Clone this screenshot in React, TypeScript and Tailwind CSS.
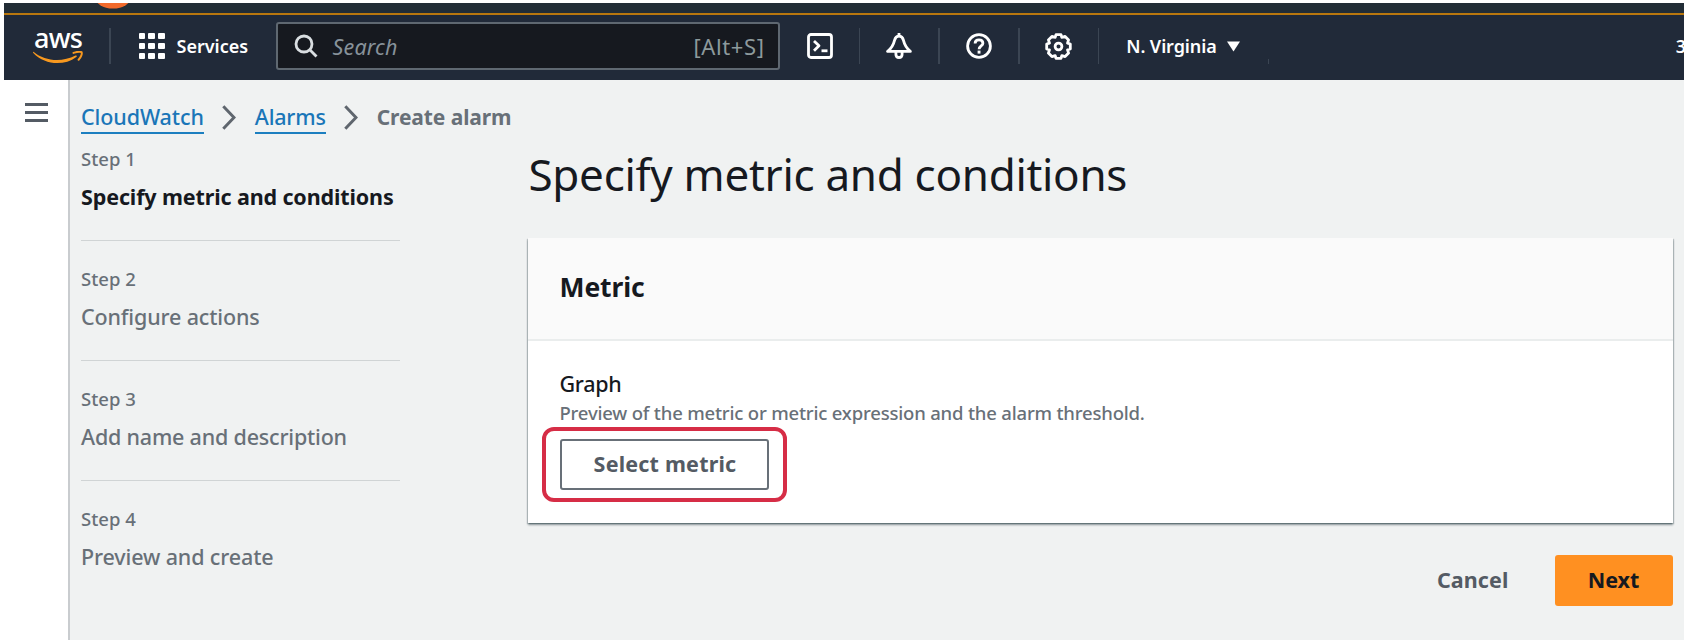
import type { ReactNode } from "react";

const steps = [
  { label: "Step 1", title: "Specify metric and conditions", style: "font-bold text-[#16191f] tracking-[-0.13px]" },
  { label: "Step 2", title: "Configure actions", style: "font-medium text-[#687078] tracking-[-0.15px]" },
  { label: "Step 3", title: "Add name and description", style: "font-medium text-[#687078] tracking-[-0.2px]" },
  { label: "Step 4", title: "Preview and create", style: "font-medium text-[#687078] tracking-[-0.13px]" },
];

function AwsLogo() {
  return (
    <div className="w-[50px] shrink-0">
      <div className="text-center text-[27px] leading-[19px] font-medium tracking-[-0.8px] text-white">aws</div>
      <svg width="50" height="14" viewBox="0 0 50 14" className="mt-[4px] block" fill="none">
        <path d="M0.5 0.8C12 10.5 29 11.5 42.5 4.6C43.6 4 44.4 5.1 43.4 5.9C31 15.2 12 14.2 0.3 2C-0.2 1.4 0 0.6 0.5 0.8Z" fill="#f7981f" />
        <path d="M40.5 1.9C43.5 0.9 47.5 0.5 48.6 1.2C49.3 2.6 48 6.5 45.6 8.8" stroke="#f7981f" strokeWidth="2" strokeLinecap="round" strokeLinejoin="round" />
      </svg>
    </div>
  );
}

function GridIcon() {
  return (
    <div className="grid w-[26px] shrink-0 grid-cols-3 gap-x-[3.5px] gap-y-[3.5px]">
      {Array.from({ length: 9 }, (_, i) => (
        <span key={i} className="h-[6.3px] rounded-[1px] bg-white" />
      ))}
    </div>
  );
}

function TerminalIcon() {
  return (
    <svg width="26" height="26" viewBox="0 0 26 26" fill="none" stroke="#fff" strokeWidth="2.8" strokeLinejoin="round">
      <rect x="1.5" y="1.5" width="23" height="23" rx="2.5" />
      <path d="M7 8L12 12.8L7 17.8" />
      <path d="M14.5 17.8H20.5" />
    </svg>
  );
}

function BellIcon() {
  return (
    <svg width="26" height="26" viewBox="0 0 26 26" fill="none" stroke="#fff" strokeWidth="2.8" strokeLinejoin="round">
      <path d="M13 3.2C10.4 3.2 9.2 4.8 8.6 7.2C7.4 12.2 5.6 15.4 1.6 18.4H24.4C20.4 15.4 18.6 12.2 17.4 7.2C16.8 4.8 15.6 3.2 13 3.2Z" />
      <path d="M13 3V0" />
      <path d="M9.9 19V21.2C9.9 23.4 11.1 24.5 13 24.5C14.9 24.5 16.1 23.4 16.1 21.2V19" />
    </svg>
  );
}

function HelpIcon() {
  return (
    <svg width="26" height="26" viewBox="0 0 26 26" fill="none" stroke="#fff" strokeWidth="2.8">
      <circle cx="13" cy="13" r="11.4" />
      <path d="M9.1 10.6C9.1 8.2 10.8 6.9 13 6.9C15.3 6.9 16.9 8.2 16.9 10.2C16.9 12.9 13.1 13 13.1 16.2" />
      <path d="M11.6 19.1H14.5" strokeWidth="3" />
    </svg>
  );
}

function GearIcon() {
  return (
    <svg width="27" height="27" viewBox="0 0 27 27" fill="none" stroke="#fff" strokeWidth="2.8" strokeLinejoin="round">
      <path d="M11 1.7H16L16.8 4.3L20.1 3.4L23.6 6.9L22.5 10.1L25.3 11V16L22.5 16.9L23.6 20.1L20.1 23.6L16.8 22.6L16 25.3H11L10.2 22.6L6.9 23.6L3.4 20.1L4.5 16.9L1.7 16V11L4.5 10.1L3.4 6.9L6.9 3.4L10.2 4.3Z" />
      <circle cx="13.5" cy="13.5" r="3.4" />
    </svg>
  );
}

function Divider() {
  return <span className="h-9 w-[1.5px] shrink-0 bg-[#3b4553]" />;
}

function HeaderIcon({ children }: { children: ReactNode }) {
  return <button className="flex w-[78.2px] shrink-0 items-center justify-center">{children}</button>;
}

function Chevron() {
  return (
    <svg width="14" height="25" viewBox="0 0 14 25" fill="none" stroke="#5f666e" strokeWidth="3" className="shrink-0">
      <path d="M1.3 1.3L12 12.5L1.3 23.7" />
    </svg>
  );
}

export default function App() {
  return (
    <div className="h-[643px] w-[1687px] overflow-hidden bg-white pt-[3px] pl-1 font-['Noto_Sans',sans-serif]">
      <div className="flex h-[637px] w-[1679.5px] flex-col overflow-hidden">
        <div className="h-[10px] shrink-0 overflow-hidden bg-[#222d36]">
          <svg width="40" height="10" className="ml-[90px] block">
            <ellipse cx="19" cy="-6" rx="18" ry="11.5" fill="#f26a2b" />
          </svg>
        </div>
        <header className="flex h-[67px] shrink-0 items-center overflow-hidden border-t-2 border-[#b9770e] bg-[#212a39] pb-[3px] pl-[29px]">
          <AwsLogo />
          <div className="ml-[26px] flex items-center">
            <Divider />
          </div>
          <button className="ml-[28px] flex shrink-0 items-center">
            <GridIcon />
            <span className="ml-[12px] w-[99px] text-left text-[18px] leading-6 font-semibold text-white">Services</span>
          </button>
          <div className="flex h-[48px] w-[504px] shrink-0 items-center rounded-[3px] border-2 border-[#5f6871] bg-[#16191f] pr-[13px] pl-4">
            <svg width="25" height="25" viewBox="0 0 25 25" fill="none" stroke="#d9dee1" strokeWidth="2.8">
              <circle cx="10" cy="10" r="8" />
              <path d="M15.8 15.8L22.5 22.5" />
            </svg>
            <span className="ml-[14px] pt-px text-[21.5px] leading-6 tracking-[0.15px] text-[#87929a] italic">Search</span>
            <span className="ml-auto text-[22px] leading-6 tracking-[0.6px] text-[#8d9a9c]">[Alt+S]</span>
          </div>
          <div className="ml-px flex shrink-0 items-center">
            <HeaderIcon><TerminalIcon /></HeaderIcon>
            <Divider />
            <HeaderIcon><BellIcon /></HeaderIcon>
            <Divider />
            <HeaderIcon><HelpIcon /></HeaderIcon>
            <Divider />
            <HeaderIcon><GearIcon /></HeaderIcon>
            <Divider />
          </div>
          <button className="ml-[27px] flex shrink-0 items-center text-[18px] leading-6 font-semibold tracking-[-0.1px] text-white">
            N. Virginia
            <svg width="13" height="11" viewBox="0 0 13 11" className="ml-[10px]">
              <path d="M0 0.5H13L6.5 10.5Z" fill="#fff" />
            </svg>
          </button>
          <span className="mt-[31px] ml-[28px] h-[5px] w-[1.5px] shrink-0 bg-[#3b4553]" />
          <span className="mr-[-2.5px] ml-auto text-[18px] leading-6 font-semibold text-white">3</span>
        </header>
        <div className="flex min-h-0 flex-1">
          <aside className="w-[64px] shrink-0">
            <button className="mt-[22.5px] ml-[21px] flex w-[23px] flex-col gap-[5px]">
              <span className="h-[3px] w-full bg-[#545b64]" />
              <span className="h-[3px] w-full bg-[#545b64]" />
              <span className="h-[3px] w-full bg-[#545b64]" />
            </button>
          </aside>
          <main className="flex-1 border-l-2 border-[#c9cccf] bg-[#f0f2f2] pr-[11px] pl-[11px]">
            <nav className="flex h-[66px] items-center pt-[8px]">
              <a className="border-b-2 border-[#1c7fc0] pt-px text-[21.5px] leading-[30px] font-medium tracking-[-0.1px] text-[#1a76b8]">CloudWatch</a>
              <span className="ml-[18px] flex"><Chevron /></span>
              <a className="ml-[19px] border-b-2 border-[#1c7fc0] pt-px text-[21.5px] leading-[30px] font-medium tracking-[-0.2px] text-[#1a76b8]">Alarms</a>
              <span className="ml-[18px] flex"><Chevron /></span>
              <span className="ml-[19px] text-[21px] leading-[29px] font-bold tracking-[-0.1px] text-[#687078]">Create alarm</span>
            </nav>
            <div className="flex">
              <ol className="w-[319px] shrink-0">
                {steps.map((s, i) => (
                  <li key={s.label} className={i < 3 ? "mb-[25.5px] h-[94.5px] border-b-[1.5px] border-[#d0d4d5]" : "h-[94.5px]"}>
                    <div className="pt-[0.5px] text-[18.5px] leading-6 font-medium text-[#687078]">{s.label}</div>
                    <div className={`mt-[10.5px] text-[21.5px] leading-8 whitespace-nowrap ${s.style}`}>{s.title}</div>
                  </li>
                ))}
              </ol>
              <section className="ml-[127.5px] flex-1">
                <h1 className="mt-[-2px] pl-px text-[44px] leading-[60px] tracking-[-0.3px] whitespace-nowrap text-[#16191f]">
                  Specify metric and conditions
                </h1>
                <div className="mt-[34px] h-[285px] bg-white shadow-[0_2px_2px_0_rgba(0,28,36,0.4),1px_1px_1px_0_rgba(0,28,36,0.18),-1px_1px_1px_0_rgba(0,28,36,0.18)]">
                  <div className="flex h-[103px] items-center border-b-2 border-[#eaeded] bg-[#fafafa] pb-[4px] pl-[32px]">
                    <h2 className="text-[26.5px] leading-9 font-bold tracking-[-0.1px] text-[#16191f]">Metric</h2>
                  </div>
                  <div className="pt-[27.5px] pl-[32px]">
                    <div className="text-[21.5px] leading-[30px] font-medium tracking-[-0.3px] text-[#16191f]">Graph</div>
                    <div className="text-[18.5px] leading-7 font-medium tracking-[-0.19px] text-[#687078]">
                      Preview of the metric or metric expression and the alarm threshold.
                    </div>
                    <div className="mt-[0.5px] -ml-[18px] flex h-[75px] w-[245px] items-center justify-center rounded-[12px] border-4 border-[#d62d46]">
                      <button className="h-[51px] w-[209px] rounded-[3px] border-2 border-[#687078] pl-0.5 text-[21.5px] font-bold tracking-[0.2px] text-[#545b64]">
                        Select metric
                      </button>
                    </div>
                  </div>
                </div>
                <div className="mt-[32px] flex items-center justify-end gap-[46px] text-[21.5px] font-bold">
                  <button className="tracking-[0.1px] text-[#545b64]">Cancel</button>
                  <button className="h-[51px] w-[118px] rounded-[3px] bg-[#ff9021] text-[#16191f]">Next</button>
                </div>
              </section>
            </div>
          </main>
        </div>
      </div>
    </div>
  );
}
